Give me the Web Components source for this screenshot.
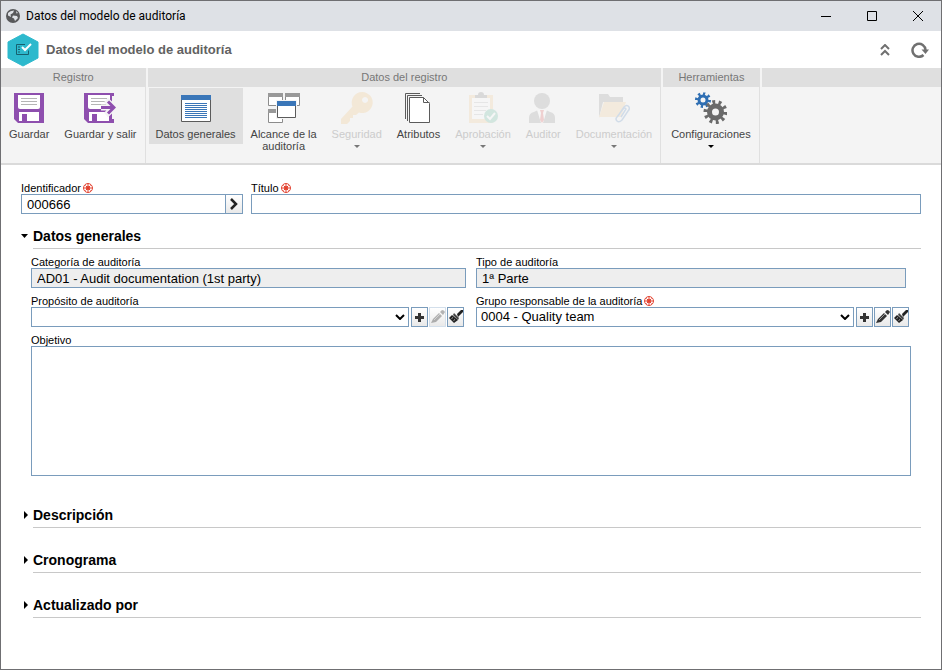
<!DOCTYPE html>
<html lang="es">
<head>
<meta charset="utf-8">
<title>Datos del modelo de auditoría</title>
<style>
  body {
    margin: 0;
    font-family: "Liberation Sans", Arial, sans-serif;
    font-size: 11px;
    line-height: 12px;
    color: #000;
  }
</style>
</head>
<body>

<app-window caption="Datos del modelo de auditoría">
  <page-header slot="header" heading="Datos del modelo de auditoría"></page-header>

  <ribbon-bar slot="ribbon">
    <ribbon-group label="Registro">
      <ribbon-button icon="save" label="Guardar"></ribbon-button>
      <ribbon-button icon="saveExit" label="Guardar y salir"></ribbon-button>
    </ribbon-group>
    <ribbon-group label="Datos del registro">
      <ribbon-button icon="form" label="Datos generales" selected></ribbon-button>
      <ribbon-button icon="scope" label="Alcance de la auditoría" wrap></ribbon-button>
      <ribbon-button icon="key" label="Seguridad" menu disabled></ribbon-button>
      <ribbon-button icon="pages" label="Atributos"></ribbon-button>
      <ribbon-button icon="approval" label="Aprobación" menu disabled></ribbon-button>
      <ribbon-button icon="person" label="Auditor" disabled></ribbon-button>
      <ribbon-button icon="folder" label="Documentación" menu disabled></ribbon-button>
    </ribbon-group>
    <ribbon-group label="Herramientas">
      <ribbon-button icon="gears" label="Configuraciones" menu></ribbon-button>
    </ribbon-group>
    <ribbon-group fill></ribbon-group>
  </ribbon-bar>

  <form-row layout="lead">
    <form-field kind="code" label="Identificador" value="000666" required></form-field>
    <form-field kind="text" label="Título" required></form-field>
  </form-row>

  <form-section heading="Datos generales" open>
    <form-row>
      <form-field kind="readonly" label="Categoría de auditoría" value="AD01 - Audit documentation (1st party)"></form-field>
      <form-field kind="readonly" label="Tipo de auditoría" value="1ª Parte" inset></form-field>
    </form-row>
    <form-row>
      <form-field kind="select" label="Propósito de auditoría"></form-field>
      <form-field kind="select" label="Grupo responsable de la auditoría" value="0004 - Quality team" required></form-field>
    </form-row>
    <form-field kind="area" label="Objetivo"></form-field>
  </form-section>
  <form-section heading="Descripción"></form-section>
  <form-section heading="Cronograma"></form-section>
  <form-section heading="Actualizado por"></form-section>
</app-window>

<script>
// All icons are drawn on their own small grid; ribbon icons use 32x32.
const svg = (w, h, body) =>
  `<svg width="${w}" height="${h}" viewBox="0 0 ${w} ${h}" fill="none" aria-hidden="true">${body}</svg>`;

const FLOPPY = `
  <path d="M0 1h30v30H4l-4-4z" fill="#8e4fae"/>
  <path d="M4 3h22v12q0 2-2 2H6q-2 0-2-2z" fill="#fff"/>
  <path d="M7 6.500h16M7 9.500h16M7 12.500h16" stroke="#b5b5b5"/>
  <path d="M5 20h20v9H5z" fill="#fff"/>
  <path d="M8 22h5v7H8z" fill="#8e4fae"/>`;

// A ring with a dashed circle around it for the teeth
const gear = (x, y, r, ring, tooth, teeth, color) => {
  const mid = r + ring / 2 + tooth / 2 - 1;
  return `
  <circle cx="${x}" cy="${y}" r="${r}" stroke="${color}" stroke-width="${ring}"/>
  <circle cx="${x}" cy="${y}" r="${mid}" stroke="${color}" stroke-width="${tooth + 1}"
    pathLength="${teeth * 2}" stroke-dasharray="0.9 1.1"/>`;
};

const ICONS = {
  save: svg(32, 32, `<g transform="translate(1)">${FLOPPY}</g>`),
  saveExit: svg(32, 32, `${FLOPPY}
    <path d="M28 4h3v23h-3z" fill="#f4f4f4"/>
    <path d="M17 15.500h12M22 8l8 7.500-8 7.500" stroke="#f4f4f4" stroke-width="6"/>
    <path d="M17 15.500h13M24 9.500l6 6-6 6" stroke="#8e4fae" stroke-width="3"/>`),
  form: svg(32, 32, `
    <path d="M1.500 3.500h29v26h-29z" fill="#fff" stroke="#5b5b5b"/>
    <path d="M1 3h30v5H1z" fill="#3a76b8"/>
    <path d="M5 11.500h22M5 13.500h22M5 15.500h22M5 17.500h22M5 19.500h22M5 21.500h22M5 23.500h22M5 25.500h22" stroke="#3a76b8"/>`),
  scope: svg(32, 32, `
    <g fill="#fff" stroke="#8c8c8c"><path d="M.5 1.500h14v12H.5zM17.500 1.500h14v12h-14zM.5 17.500h14v13H.5z"/></g>
    <path d="M0 1h15v4H0zM17 1h15v4H17zM0 17h15v4H0z" fill="#999"/>
    <path d="M8 8h21v19H8z" fill="#f4f4f4"/>
    <path d="M9.500 9.500h18v16h-18z" fill="#fff" stroke="#5b5b5b"/>
    <path d="M9 9h19v5H9z" fill="#3a76b8"/>`),
  key: svg(32, 32, `
    <path fill-rule="evenodd" fill="#f3b65b" d="M21 0a10.500 10.500 0 1 1-3 20.500L15 23h-3v3h-3v3l-3 3H0v-5l11.500-12.500A10.500 10.500 0 0 1 21 0zm3 5a3 3 0 1 0 .1 0z"/>`),
  pages: svg(32, 32, `
    <path d="M3.500 27V1.500H18M5.500 29V3.500H20" stroke="#5b5b5b"/>
    <path d="M7.500 5.500h14l6 6v19h-20z" fill="#fff" stroke="#5b5b5b"/>
    <path d="M21.500 5.500v5h6" stroke="#5b5b5b"/>`),
  approval: svg(32, 32, `
    <path d="M2 3h24v28H2z" fill="#f3c27c"/>
    <path d="M5 6h18v21H5z" fill="#fff"/>
    <path d="M8 6V3h3a3 3 0 0 1 6 0h3v3z" fill="#666"/>
    <path d="M7 10.500h14M7 14.500h14M7 18.500h12M7 22.500h9" stroke="#aaa"/>
    <circle cx="24" cy="24" r="7" fill="#3fa887"/>
    <path d="M20 24l3 3 5-6" stroke="#fff" stroke-width="2"/>`),
  person: svg(32, 32, `
    <circle cx="15" cy="9" r="8" fill="#777"/>
    <path d="M2 31v-5q0-5 5-6l4-2h8l4 2q5 1 5 6v5z" fill="#777"/>
    <path d="M10 18h10l-4 13h-2z" fill="#fff"/>
    <path d="M13 18h4l-1 3 1 7-2 3-2-3 1-7z" fill="#d33"/>`),
  folder: svg(32, 32, `
    <path d="M1 26V2h9l2 3h13v5H5z" fill="#777"/>
    <path d="M6 10h22l-5 15H1z" fill="#f3c27c"/>
    <path d="M20 24l6-9q3-3 5 0 1 2-1 4l-6 9q-3 3-5 1-2-2 0-4l6-8q2-2 3 0l-5 8" stroke="#3a76b8" stroke-width="1.500"/>`),
  gears: svg(32, 32, `
    ${gear(8, 8, 4, 3, 3, 8, "#2f6fb3")}
    ${gear(20.5, 20, 6, 5, 4, 10, "#6a6a6a")}`),
  globe: svg(14, 14, `
    <circle cx="7" cy="7" r="7" fill="#58595b"/>
    <path d="M2 4q2-2.500 6-2.500L7 4 4.500 5.500 5 8 2 6.500zM7 6.500l4 .5 1 2-3 3-1-2.500-2-1zM10 2l2 2-1.500.5z" fill="#dee1e6"/>`),
  logo: svg(32, 34, `
    <path d="M16 1l15 8v16l-15 8-15-8V9z" fill="#2db9cd" stroke="#2db9cd" stroke-linejoin="round"/>
    <path d="M18 11.500H9.500v10h12v-4" stroke="#17606f"/>
    <path d="M11 14h2M11 16.500h2M11 19h2" stroke="#17606f"/>
    <path d="M15 14l3 3 6-6" stroke="#fff" stroke-width="2"/>`),
  minimize: svg(10, 10, `<path d="M0 5.500h10" stroke="#000"/>`),
  maximize: svg(10, 10, `<path d="M.5.5h9v9h-9z" stroke="#000"/>`),
  close: svg(10, 10, `<path d="M0 0l10 10M10 0L0 10" stroke="#000"/>`),
  collapse: svg(10, 12, `<path d="M1 5l4-4 4 4M1 11l4-4 4 4" stroke="#707070" stroke-width="2"/>`),
  refresh: svg(18, 16, `
    <path d="M12.500 13A6.500 6.500 0 1 1 14.500 8" stroke="#707070" stroke-width="2.500"/>
    <path d="M10.500 7.500H18L14.500 12z" fill="#707070"/>`),
  caret: svg(6, 3, `<path d="M0 0h6L3 3z" fill="currentColor"/>`),
  expanded: svg(7, 4, `<path d="M0 0h7L3.500 4z" fill="#000"/>`),
  collapsed: svg(4, 8, `<path d="M0 0v8l4-4z" fill="#000"/>`),
  required: svg(10, 10, `
    <circle cx="5" cy="5" r="4.500" stroke="#e2412f"/>
    <circle cx="5" cy="5" r="2" fill="#e2412f"/>
    <path d="M5 1v8M1 5h8M2.500 2.500l5 5M7.500 2.500l-5 5" stroke="#e2412f"/>`),
  next: svg(8, 12, `<path d="M1 1l5 5-5 5" stroke="#222" stroke-width="2.500"/>`),
  chevron: svg(10, 6, `<path d="M1 1l4 4 4-4" stroke="#000" stroke-width="2"/>`),
  plus: svg(9, 9, `<path d="M4.500 0v9M0 4.500h9" stroke="#333" stroke-width="3"/>`),
  pencil: svg(14, 14, `
    <path d="M0 13l2-4 6-6 3 3-6 6z" fill="#333"/>
    <path d="M9 2l2-2q2 0 3 2l-2 3z" fill="#333"/>
    <path d="M3 10l6-6" stroke="#999"/>`),
  brush: svg(14, 14, `
    <path d="M8 4l4-4h2v2L9 7z" fill="#222"/>
    <path d="M5 3l5 5-1 2-5-5z" fill="#444"/>
    <path d="M3 5l6 5-4 3-5-5z" fill="#222"/>
    <path d="M2.500 8.500l1.500-1M4.500 10.500l1.500-1" stroke="#aaa"/>`)
};

class AppWindow extends HTMLElement {
  constructor() {
    super();
    this.attachShadow({ mode: "open" });
  }

  connectedCallback() {
    this.shadowRoot.innerHTML = `
      <style>
        :host {
          display: flex;
          flex-direction: column;
          box-sizing: border-box;
          min-height: 100vh;
          border: 1px solid #6f6f72;
          background: #fff;
        }
        .titlebar {
          display: flex;
          align-items: center;
          height: 30px;
          padding-left: 5px;
          gap: 6px;
          background: #dee1e6;
          font: 12px/16px Roboto, sans-serif;
        }
        .caption { flex: 1; }
        .controls { display: flex; }
        button {
          display: grid;
          place-items: center;
          width: 46px;
          height: 30px;
          padding: 0;
          border: 0;
          background: none;
        }
        button:hover { background: #cfd2d8; }
        main { padding: 17px 20px; }
      </style>
      <div class="titlebar">
        ${ICONS.globe}
        <span class="caption">${this.getAttribute("caption")}</span>
        <div class="controls">
          <button aria-label="Minimizar">${ICONS.minimize}</button>
          <button aria-label="Maximizar">${ICONS.maximize}</button>
          <button aria-label="Cerrar">${ICONS.close}</button>
        </div>
      </div>
      <slot name="header"></slot>
      <slot name="ribbon"></slot>
      <main><slot></slot></main>
    `;
  }
}

class PageHeader extends HTMLElement {
  constructor() {
    super();
    this.attachShadow({ mode: "open" });
  }

  connectedCallback() {
    this.shadowRoot.innerHTML = `
      <style>
        :host {
          display: flex;
          align-items: center;
          gap: 7px;
          height: 37px;
          padding: 0 7px 0 6px;
        }
        h1 {
          flex: 1;
          margin: 0;
          font-size: 13px;
          line-height: 16px;
          color: #626262;
        }
        button {
          display: grid;
          place-items: center;
          width: 28px;
          height: 28px;
          padding: 0;
          border: 0;
          background: none;
        }
      </style>
      ${ICONS.logo}
      <h1>${this.getAttribute("heading")}</h1>
      <button aria-label="Contraer">${ICONS.collapse}</button>
      <button aria-label="Actualizar">${ICONS.refresh}</button>
    `;
  }
}

class RibbonBar extends HTMLElement {
  constructor() {
    super();
    this.attachShadow({ mode: "open" });
  }

  connectedCallback() {
    this.shadowRoot.innerHTML = `
      <style>
        :host {
          display: flex;
          gap: 2px;
          height: 95px;
          background: #f4f4f4;
          border-bottom: 2px solid #dadada;
        }
      </style>
      <slot></slot>
    `;
  }
}

class RibbonGroup extends HTMLElement {
  constructor() {
    super();
    this.attachShadow({ mode: "open" });
  }

  connectedCallback() {
    this.shadowRoot.innerHTML = `
      <style>
        :host { display: flex; flex-direction: column; }
        :host([fill]) { flex: 1; }
        .label {
          height: 19px;
          line-height: 19px;
          text-align: center;
          color: #777;
          background: #dfdfdf;
        }
        .items {
          display: flex;
          flex: 1;
          align-items: flex-start;
          gap: 1px;
          padding: 1px 1px 0;
          border-right: 1px solid #e0e0e0;
        }
        :host([fill]) .items { border: 0; }
      </style>
      <div class="label">${this.getAttribute("label") || ""}</div>
      <div class="items"><slot></slot></div>
    `;
  }
}

class RibbonButton extends HTMLElement {
  constructor() {
    super();
    this.attachShadow({ mode: "open" });
  }

  connectedCallback() {
    const disabled = this.hasAttribute("disabled") ? "disabled" : "";
    const caret = this.hasAttribute("menu") ? `<span class="caret">${ICONS.caret}</span>` : "";

    this.shadowRoot.innerHTML = `
      <style>
        :host { display: block; }
        button {
          display: flex;
          flex-direction: column;
          align-items: center;
          padding: 4px 7px;
          border: 0;
          background: none;
          font: inherit;
          color: #444;
          white-space: nowrap;
        }
        button > svg { margin-bottom: 4px; }
        :host([wrap]) button {
          width: 80px;
          padding: 4px 5px;
          white-space: normal;
        }
        :host([selected]) button { background: #dfdfdf; }
        button:disabled { color: #ccc; }
        button:disabled > svg { opacity: 0.18; }
        .caret {
          display: grid;
          place-items: center;
          height: 12px;
          color: #000;
        }
        button:disabled .caret { color: #777; }
      </style>
      <button ${disabled}>
        ${ICONS[this.getAttribute("icon")]}
        <span>${this.getAttribute("label")}</span>
        ${caret}
      </button>
    `;
  }
}

class FormRow extends HTMLElement {
  constructor() {
    super();
    this.attachShadow({ mode: "open" });
  }

  connectedCallback() {
    this.shadowRoot.innerHTML = `
      <style>
        :host {
          display: grid;
          grid-template-columns: 1fr 1fr;
          gap: 10px;
        }
        :host([layout="lead"]) {
          grid-template-columns: 222px 1fr;
          gap: 8px;
          margin-bottom: 14px;
        }
      </style>
      <slot></slot>
    `;
  }
}

class FormField extends HTMLElement {
  constructor() {
    super();
    this.attachShadow({ mode: "open" });
  }

  connectedCallback() {
    const mark = this.hasAttribute("required") ? ICONS.required : "";

    this.shadowRoot.innerHTML = `
      <style>
        :host { display: block; min-width: 0; }
        :host([inset]) { padding-right: 5px; }
        label {
          display: flex;
          align-items: center;
          gap: 2px;
          height: 12px;
          white-space: nowrap;
        }
        .control { display: flex; }
        input, select, textarea {
          box-sizing: border-box;
          flex: 1;
          width: 100%;
          min-width: 0;
          height: 20px;
          margin: 0;
          padding: 0 5px;
          border: 1px solid #7a9cbc;
          border-radius: 0;
          background: #fff;
          font: 13px/18px "Liberation Sans", Arial, sans-serif;
          color: #000;
        }
        input[readonly] { background: #eee; }
        textarea { height: 130px; resize: none; }
        select { appearance: none; padding: 0 20px 0 4px; }
        .pick { display: grid; flex: 1; align-items: center; }
        .pick > * { grid-area: 1 / 1; }
        .pick svg {
          justify-self: end;
          margin-right: 4px;
          pointer-events: none;
        }
        .tools { display: flex; gap: 1px; padding: 0 2px; }
        button {
          display: grid;
          place-items: center;
          box-sizing: border-box;
          width: 17px;
          height: 20px;
          padding: 0;
          border: 1px solid #7a9cbc;
          background: linear-gradient(#fff, #e9e9e9);
        }
        .control > button { border-left: 0; }
        button:disabled { border-color: #d3dfeb; }
        button:disabled svg { opacity: 0.35; }
      </style>
      <label for="control">${this.getAttribute("label")}${mark}</label>
      <div class="control">${this.control()}</div>
    `;
  }

  control() {
    const value = this.getAttribute("value") || "";
    switch (this.getAttribute("kind")) {
      case "code":
        return `<input id="control" value="${value}"><button aria-label="Siguiente">${ICONS.next}</button>`;
      case "readonly":
        return `<input id="control" value="${value}" readonly>`;
      case "area":
        return `<textarea id="control"></textarea>`;
      case "select":
        return `
          <div class="pick">
            <select id="control"><option>${value}</option></select>
            ${ICONS.chevron}
          </div>
          <div class="tools">
            <button aria-label="Agregar">${ICONS.plus}</button>
            <button aria-label="Editar" ${value ? "" : "disabled"}>${ICONS.pencil}</button>
            <button aria-label="Limpiar">${ICONS.brush}</button>
          </div>`;
      default:
        return `<input id="control" value="${value}">`;
    }
  }
}

class FormSection extends HTMLElement {
  constructor() {
    super();
    this.attachShadow({ mode: "open" });
  }

  connectedCallback() {
    this.render();
  }

  render() {
    const open = this.hasAttribute("open");

    this.shadowRoot.innerHTML = `
      <style>
        :host { display: block; margin-bottom: 24px; }
        h2 { margin: 0; font-size: 14px; line-height: 16px; }
        button {
          display: flex;
          width: 100%;
          padding: 0;
          border: 0;
          background: none;
          font: inherit;
          color: inherit;
          text-align: left;
        }
        .marker {
          display: grid;
          place-items: center end;
          box-sizing: border-box;
          width: 12px;
          height: 16px;
          padding-right: 5px;
        }
        .text { flex: 1; padding-bottom: 4px; border-bottom: 1px solid #c8c8c8; }
        .body {
          display: grid;
          gap: 7px;
          padding: 7px 10px;
        }
      </style>
      <h2>
        <button aria-expanded="${open}">
          <span class="marker">${open ? ICONS.expanded : ICONS.collapsed}</span>
          <span class="text">${this.getAttribute("heading")}</span>
        </button>
      </h2>
      ${open ? `<div class="body"><slot></slot></div>` : ""}
    `;
    this.shadowRoot.querySelector("button").addEventListener("click", () => {
      this.toggleAttribute("open");
      this.render();
    });
  }
}

customElements.define("app-window", AppWindow);
customElements.define("page-header", PageHeader);
customElements.define("ribbon-bar", RibbonBar);
customElements.define("ribbon-group", RibbonGroup);
customElements.define("ribbon-button", RibbonButton);
customElements.define("form-row", FormRow);
customElements.define("form-field", FormField);
customElements.define("form-section", FormSection);
</script>
</body>
</html>
